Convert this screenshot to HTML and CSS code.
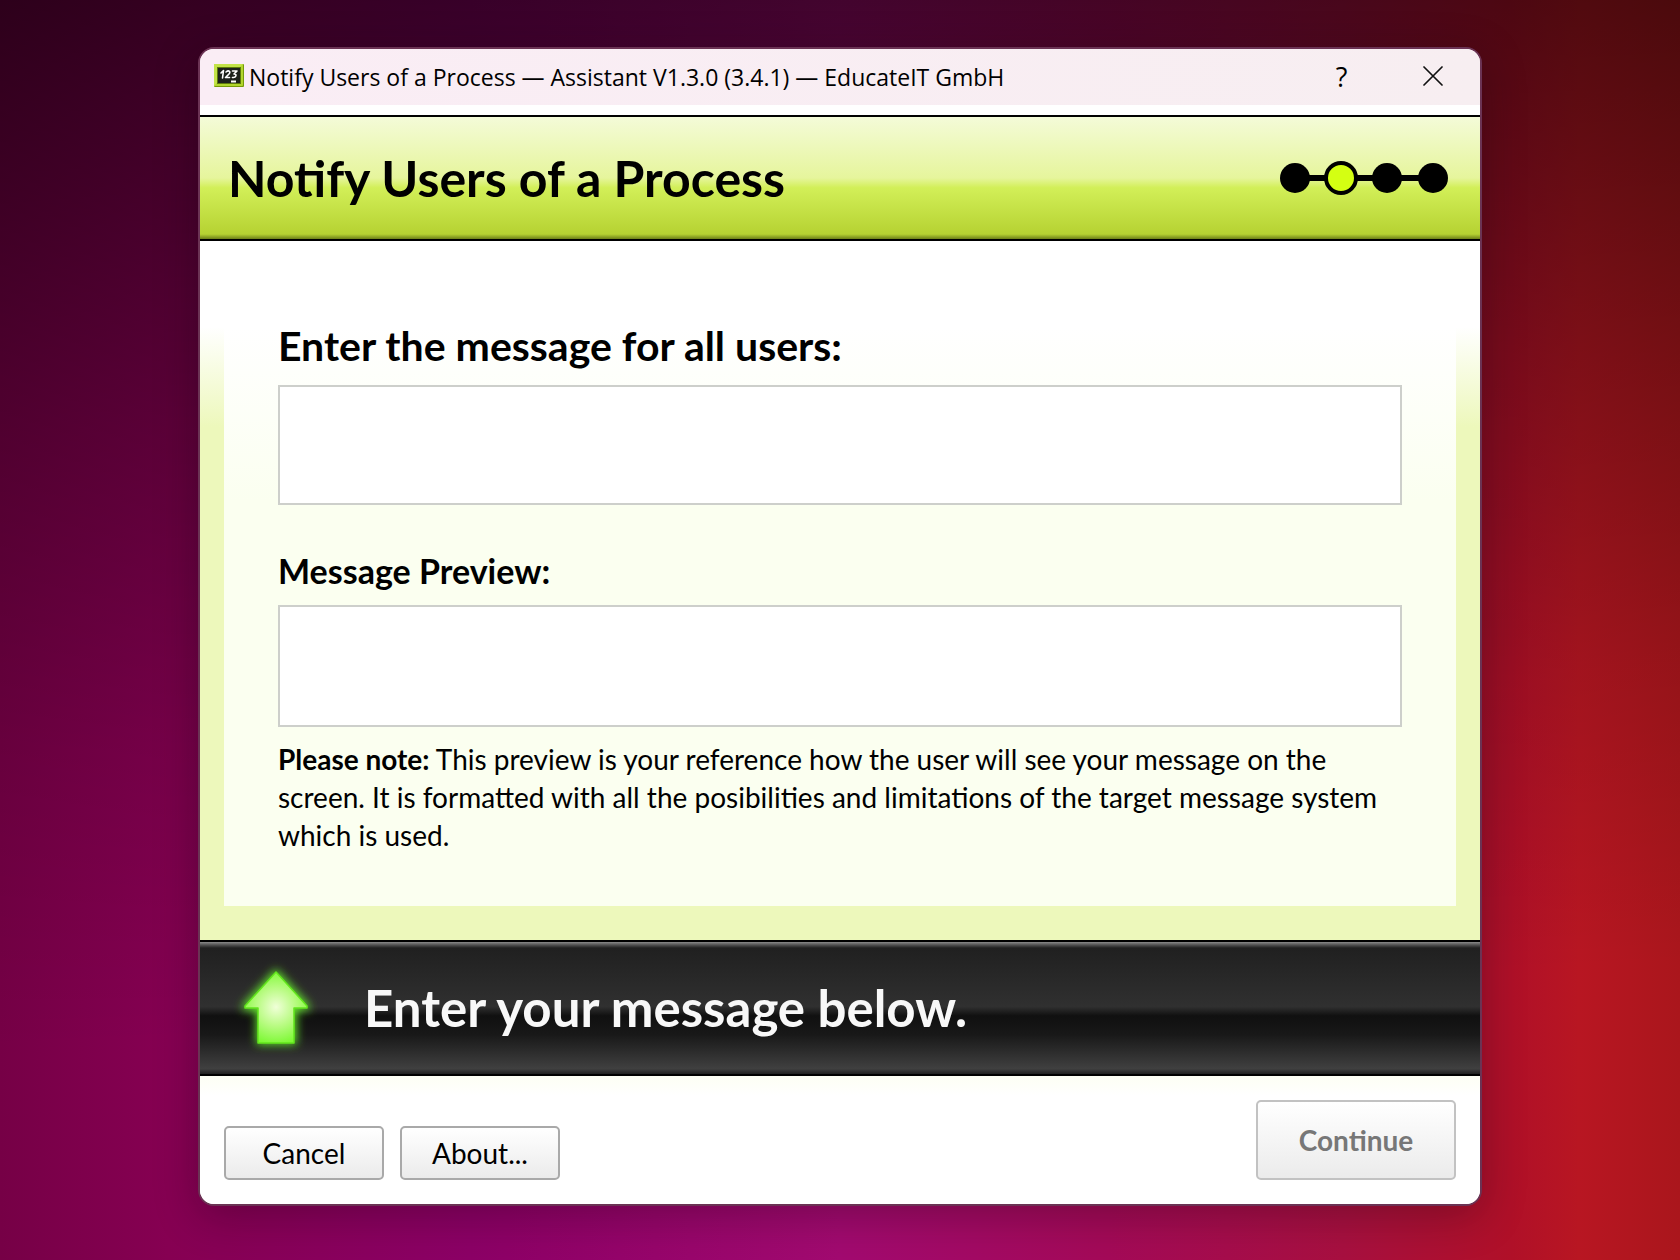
FILE: index.html
```html
<!DOCTYPE html>
<html lang="en">
<head>
<meta charset="utf-8">
<meta name="viewport" content="width=device-width, initial-scale=1">
<title>Notify Users of a Process</title>
<link rel="stylesheet" href="styles.css">
</head>
<body>
<div class="window">
  <div class="titlebar">
    <svg class="app-icon" viewBox="0 0 30 24" aria-hidden="true">
      <rect width="30" height="23" rx="1" fill="#769a08"/>
      <rect width="29" height="22" rx="1" fill="#b2d62d"/>
      <path d="M0 22V0h29l-3 3H3v16z" fill="#c3e348"/>
      <rect x="3" y="3" width="24" height="17" fill="#5c7a0a"/>
      <rect x="4" y="4" width="22" height="15" fill="#1d211b"/>
      <g fill="none" stroke="#fff" stroke-width="1.6" stroke-linecap="round" stroke-linejoin="round">
        <path d="M7 9l2.500-2.500-1 7.500"/>
        <path d="M12 8c3-2.500 5 0 3 2l-3.500 3.500h4"/>
        <path d="M18.500 7h4.500l-3 3c3.500 0 2 4-1.500 3.500"/>
      </g>
      <path d="M17 17.500h5" stroke="#fff" stroke-width="2"/>
    </svg>
    <span class="titlebar-text">Notify Users of a Process — Assistant V1.3.0 (3.4.1) — EducateIT GmbH</span>
    <button class="title-button" type="button" aria-label="Help">?</button>
    <button class="title-button" type="button" aria-label="Close">
      <svg width="20" height="20" viewBox="0 0 20 20" aria-hidden="true"><path d="M1 1l18 18M19 1L1 19" stroke="#111" stroke-width="1.700" stroke-linecap="round"/></svg>
    </button>
  </div>

  <header class="banner">
    <h1 class="banner-title">Notify Users of a Process</h1>
    <svg class="steps" width="170" height="36" viewBox="0 0 170 36" role="img" aria-label="Step 2 of 4">
      <path d="M16 18h138" stroke="#000" stroke-width="6"/>
      <circle cx="16" cy="18" r="15"/>
      <circle cx="62" cy="18" r="15" fill="#d4ff12" stroke="#000" stroke-width="4"/>
      <circle cx="108" cy="18" r="15"/>
      <circle cx="154" cy="18" r="15"/>
    </svg>
  </header>

  <main class="content">
    <div class="panel">
      <label class="label-large" for="message">Enter the message for all users:</label>
      <textarea class="box" id="message"></textarea>
      <label class="label-small" for="preview">Message Preview:</label>
      <textarea class="box box-preview" id="preview" readonly></textarea>
      <p class="note"><strong>Please note:</strong> This preview is your reference how the user will see your message on the screen. It is formatted with all the posibilities and limitations of the target message system which is used.</p>
    </div>
  </main>

  <section class="hint">
    <svg class="arrow" width="96" height="104" viewBox="0 0 96 104" aria-hidden="true">
      <defs>
        <radialGradient id="arrow-fill" gradientUnits="userSpaceOnUse" cx="48" cy="51" r="38">
          <stop offset="0" stop-color="#f0ffd8"/>
          <stop offset="0.5" stop-color="#b9fb83"/>
          <stop offset="1" stop-color="#7bf932"/>
        </radialGradient>
        <filter id="glow" x="-40%" y="-40%" width="180%" height="180%"><feGaussianBlur stdDeviation="5"/></filter>
      </defs>
      <path d="M48 15L80 50v3H67v34H30V53H16v-3z" fill="#63e82a" stroke="#63e82a" stroke-width="3" filter="url(#glow)"/>
      <path d="M48 16L79 50v2H66v35H30V52H17v-2z" fill="url(#arrow-fill)" stroke="#62e61c" stroke-width="1.500" stroke-linejoin="round"/>
    </svg>
    <p class="hint-text">Enter your message below.</p>
  </section>

  <footer class="actions">
    <button class="button" type="button">Cancel</button>
    <button class="button" type="button">About...</button>
    <button class="button button-primary" type="button" disabled>Continue</button>
  </footer>
</div>
</body>
</html>
```
FILE: styles.css
```css
* {
  box-sizing: border-box;
}

body {
  margin: 0;
  min-height: 100vh;
  padding: 47px 198px 53px;
  color: #000;
  font-family: Lato, "Liberation Sans", sans-serif;
  background:
    linear-gradient(177deg, rgba(0, 0, 0, 0.62) 0%, rgba(0, 0, 0, 0.32) 32%, rgba(0, 0, 0, 0.12) 56%, rgba(0, 0, 0, 0) 78%),
    linear-gradient(90deg, #760046 0%, #860052 10%, #8c0066 28%, #a20a70 50%, #a40a58 66%, #a81040 80%, #b01028 90%, #b81622 94%, #aa161c 100%);
}

.window {
  display: flex;
  flex-direction: column;
  overflow: hidden;
  border: 2px solid #6b3354;
  border-radius: 16px;
  background: #fff;
  box-shadow: 0 10px 44px rgba(20, 0, 10, 0.3);
}

.titlebar {
  display: flex;
  align-items: center;
  min-height: 56px;
  padding: 0 2px 0 14px;
  background: linear-gradient(90deg, #faedf5, #f7eef1);
  font-family: "Open Sans", "Noto Sans", sans-serif;
}

.app-icon {
  flex: none;
  width: 30px;
  height: 24px;
  margin: 0 5px 2px 0;
}

.titlebar-text {
  flex: 1;
  font-size: 23px;
}

.title-button {
  display: flex;
  align-items: center;
  justify-content: center;
  width: 91px;
  height: 56px;
  padding: 0 0 2px;
  border: 0;
  background: none;
  color: #000;
  font-family: inherit;
  font-size: 27px;
}

.banner {
  display: flex;
  align-items: center;
  justify-content: space-between;
  min-height: 126px;
  margin-top: 10px;
  padding: 0 31px 0 28px;
  border-top: 2px solid #000;
  border-bottom: 2px solid #000;
  background: linear-gradient(#f4fbd8 0%, #e6f59c 50%, #d2ef58 58%, #b6d232 96%, #6d8018 100%);
}

.banner-title {
  margin: 0;
  font-size: 50px;
  line-height: 60px;
}

.content {
  padding: 0 24px 34px;
  background: linear-gradient(#fff 86px, #edf8bb 186px);
}

.panel {
  display: flex;
  flex-direction: column;
  padding: 79px 54px 52px;
  background: linear-gradient(#fff 86px, #fbfff0 260px);
}

.label-large {
  margin-bottom: 13px;
  font-size: 41px;
  font-weight: bold;
  line-height: 52px;
}

.label-small {
  margin: 45px 0 13px;
  font-size: 34px;
  font-weight: bold;
  line-height: 42px;
}

.box {
  display: block;
  width: 100%;
  height: 120px;
  padding: 12px;
  border: 2px solid #cdcfcb;
  background: #fff;
  font: inherit;
  font-size: 28px;
  resize: none;
  outline: none;
}

.box-preview {
  height: 122px;
}

.note {
  margin: 13px 0 0;
  font-size: 28px;
  line-height: 38px;
}

.hint {
  display: flex;
  align-items: center;
  min-height: 136px;
  padding: 0 28px;
  border-top: 2px solid #000;
  border-bottom: 2px solid #000;
  background: linear-gradient(#8a8a8a 0, #505050 3px, #202020 6px, #303030 49%, #101010 56%, #181818 70%, #404040 96%, #202020 100%);
  color: #f8f8f8;
}

.arrow {
  flex: none;
  margin-right: 40px;
}

.hint-text {
  margin: 0;
  font-size: 51px;
  font-weight: bold;
  line-height: 60px;
}

.actions {
  display: flex;
  align-items: flex-end;
  gap: 16px;
  min-height: 128px;
  padding: 24px;
  background: linear-gradient(#fdfff4, #fff 20px);
}

.button {
  width: 160px;
  height: 54px;
  padding: 0;
  border: 2px solid #a9a9a9;
  border-radius: 5px;
  background: linear-gradient(#fff, #ebebeb);
  color: #000;
  font-family: inherit;
  font-size: 28px;
}

.button-primary {
  width: 200px;
  height: 80px;
  margin-left: auto;
  border-color: #c2c2c2;
  color: #777;
  font-weight: bold;
}
```
